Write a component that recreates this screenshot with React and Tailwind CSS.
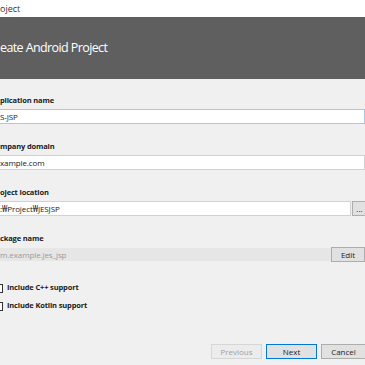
import React from "react";

const Label = ({ children }) => (
  <div className="h-[12px] mb-[3px] text-[7.5px] tracking-[-0.15px] leading-[12px] font-bold text-[#1a1a1a]">
    {children}
  </div>
);

const Field = ({ value, focused }) => (
  <div
    className={`h-[15px] flex items-center bg-white border-y border-r text-[8px] tracking-[-0.1px] text-[#222] ${
      focused ? "border-[#a6c8ea]" : "border-[#d2d2d2]"
    }`}
  >
    {value}
  </div>
);

const Check = ({ label }) => (
  <div className="h-[12px] flex items-center gap-[4px]">
    <div className="w-[9px] h-[9px] -ml-[6px] border border-[#333] bg-white"></div>
    <span className="text-[7.5px] tracking-[-0.15px] font-bold text-[#1a1a1a]">{label}</span>
  </div>
);

export default function App() {
  return (
    <div
      className="w-[365px] h-[365px] overflow-hidden flex flex-col bg-[#f0f0f0]"
      style={{ fontFamily: '"Open Sans", "Noto Sans", sans-serif' }}
    >
      {/* window title */}
      <div className="h-[17px] bg-white flex items-center text-[9px] text-[#333]">
        oject
      </div>

      {/* header */}
      <div className="h-[62px] bg-[#5f5f5f] flex items-center text-white text-[12.5px] tracking-[-0.6px]">
        eate Android Project
      </div>

      {/* form */}
      <div className="flex-1 flex flex-col pt-[15px]">
        <div className="mb-[16px]">
          <Label>plication name</Label>
          <Field value="S-JSP" focused />
        </div>
        <div className="mb-[16px]">
          <Label>mpany domain</Label>
          <Field value="xample.com" />
        </div>
        <div className="mb-[16px]">
          <Label>oject location</Label>
          <div className="flex gap-[1px] -mr-[2px]">
            <div className="flex-1">
              <Field value=":₩Project₩JESJSP" />
            </div>
            <button className="w-[15px] h-[15px] bg-[#e1e1e1] border border-[#adadad] text-[8px] leading-none text-[#222]">
              ...
            </button>
          </div>
        </div>
        <div>
          <Label>ckage name</Label>
          <div className="flex h-[15px]">
            <div className="flex-1 my-[1px] flex items-center bg-[#e6e6e6] text-[8px] tracking-[-0.1px] text-[#9a9a9a]">
              m.example.jes_jsp
            </div>
            <button className="w-[34px] h-[15px] bg-[#e1e1e1] border border-[#adadad] text-[8px] leading-none text-[#222]">
              Edit
            </button>
          </div>
        </div>

        <div className="mt-[20px] flex flex-col gap-[6px]">
          <Check label="Include C++ support" />
          <Check label="Include Kotlin support" />
        </div>

        <div className="mt-auto pb-[6px] flex justify-end gap-[4px] -mr-[1px]">
          <button className="w-[51px] h-[15px] bg-[#ececec] border border-[#d6d6d6] text-[8px] leading-none text-[#a0a0a0]">
            Previous
          </button>
          <button className="w-[51px] h-[15px] bg-[#e1e1e1] border border-[#0078d7] text-[8px] leading-none text-[#222]">
            Next
          </button>
          <button className="w-[45px] h-[15px] bg-[#e1e1e1] border border-[#adadad] text-[8px] leading-none text-[#222]">
            Cancel
          </button>
        </div>
      </div>
    </div>
  );
}
